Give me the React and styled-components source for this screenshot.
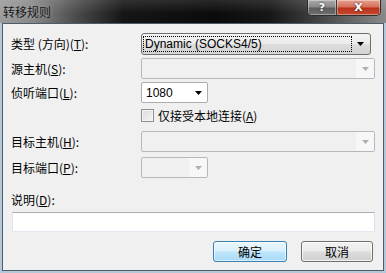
import React from "react";
import styled, { createGlobalStyle } from "styled-components";

const Global = createGlobalStyle`
  html, body { margin: 0; padding: 0; width: 386px; height: 273px; overflow: hidden; }
  body { font-family: "Noto Sans CJK SC", "Microsoft YaHei", sans-serif; font-size: 12px; color: #000; }
  * { box-sizing: border-box; }
`;

const Window = styled.div`
  width: 386px;
  height: 273px;
  display: flex;
  flex-direction: column;
  background: #b3c9da;
  padding: 0 2px 2px 2px;
`;

const TitleBar = styled.div`
  height: 23px;
  margin: 0 -2px;
  display: flex;
  align-items: flex-start;
  justify-content: space-between;
  background:
    linear-gradient(180deg, rgba(255,255,255,0.12) 0%, rgba(255,255,255,0) 60%),
    linear-gradient(90deg, #9c9c9c 0%, #8a8a8a 8%, #4a4a4a 20%, #151515 32%, #0b0b0b 55%, #161616 70%, #3a3a3a 80%, #6a6a6a 92%, #8a8a8a 100%);
`;

const Title = styled.div`
  padding: 4px 0 0 3px;
  font-size: 12px;
  line-height: 15px;
  color: #161616;
  text-shadow: 0 0 4px rgba(200,200,200,0.6);
`;

const Caps = styled.div`
  display: flex;
  margin-right: 5px;
  border: 1px solid #2e2e2e;
  border-top: none;
  border-radius: 0 0 5px 5px;
  overflow: hidden;
  height: 16px;
`;

const CapBtn = styled.div`
  width: ${p => p.$w}px;
  height: 100%;
  display: flex;
  align-items: center;
  justify-content: center;
  color: #fff;
  font-family: "DejaVu Sans", sans-serif;
  font-weight: bold;
  font-size: ${p => p.$fs}px;
  line-height: 1;
  text-shadow: 0 0 2px rgba(0,0,0,0.8);
  background: ${p => p.$red
    ? "linear-gradient(180deg, #e8a190 0%, #d5705b 45%, #b9321c 55%, #c74a30 100%)"
    : "linear-gradient(180deg, #a9a9a9 0%, #8a8a8a 45%, #5e5e5e 55%, #6e6e6e 100%)"};
  border-left: ${p => p.$red ? "1px solid #3a3a3a" : "none"};
  box-shadow: inset 0 0 0 1px rgba(255,255,255,0.35);
`;

const Client = styled.div`
  flex: 1;
  background: #f0f0f0;
  border: 1px solid #4f5b66;
  padding: 9px 9px 0 8px;
  display: flex;
  flex-direction: column;
`;

const Row = styled.div`
  display: grid;
  grid-template-columns: 130px 1fr;
  align-items: center;
  height: ${p => p.$h}px;
  margin-top: ${p => p.$mt || 0}px;
`;

const Label = styled.label`
  line-height: 16px;
  white-space: nowrap;
  u { text-decoration: underline; }
`;

const Combo = styled.div`
  width: ${p => p.$w}px;
  height: 100%;
  display: flex;
  align-items: center;
  border: 1px solid ${p => p.$disabled ? "#b5b8bb" : "#abadb3"};
  border-radius: 2px;
  background: ${p => p.$disabled ? "#f0f0f0" : "#fff"};
  font-family: "Liberation Sans", Arial, sans-serif;
  font-size: 12px;
  overflow: hidden;
`;

const DropButton = styled.div`
  width: ${p => p.$w}px;
  height: 100%;
  display: flex;
  align-items: center;
  border: 1px solid #707070;
  border-radius: 3px;
  background: linear-gradient(180deg, #f3f3f3 0%, #ebebeb 48%, #dddddd 52%, #d3d3d3 100%);
  padding: 2px 2px 2px 1px;
  font-family: "Liberation Sans", Arial, sans-serif;
  font-size: 12px;
`;

const Focus = styled.div`
  flex: 1;
  height: 100%;
  border: 1px dotted #000;
  display: flex;
  align-items: center;
  padding-left: 1px;
`;

const ComboText = styled.div`
  flex: 1;
  height: 100%;
  display: flex;
  align-items: center;
  padding-left: 4px;
`;

const ArrowBox = styled.div`
  width: ${p => p.$w || 18}px;
  height: 100%;
  display: flex;
  align-items: center;
  justify-content: center;
  background: ${p => p.$disabled ? "#f7f7f7" : "transparent"};
`;

const Arrow = ({ color = "#000" }) => (
  <svg width="7" height="4" viewBox="0 0 7 4">
    <polygon points="0,0 7,0 3.5,4" fill={color} />
  </svg>
);

const CheckRow = styled.div`
  display: flex;
  align-items: center;
  gap: 4px;
`;

const CheckBox = styled.div`
  width: 13px;
  height: 13px;
  border: 1px solid #8e8f8f;
  background: linear-gradient(135deg, #dcdcdc 0%, #f4f4f4 100%);
  box-shadow: inset 0 0 0 1px #f4f4f4;
`;

const TextInput = styled.div`
  height: ${p => p.$h}px;
  margin-top: ${p => p.$mt}px;
  width: 363px;
  margin-left: 1px;
  background: #fff;
  border: 1px solid #abadb3;
  border-top-color: #abadb3;
  border-left-color: #e2e3ea;
  border-right-color: #dbdfe6;
  border-bottom-color: #e3e9ef;
`;

const ButtonBar = styled.div`
  display: flex;
  justify-content: flex-end;
  gap: 14px;
  margin-top: 9px;
  height: 21px;
  padding-right: 1px;
`;

const Button = styled.div`
  width: ${p => p.$w}px;
  height: 21px;
  display: flex;
  align-items: center;
  justify-content: center;
  border-radius: 3px;
  font-size: 12px;
  border: 1px solid ${p => p.$default ? "#3c7fb1" : "#707070"};
  background: ${p => p.$default
    ? "linear-gradient(180deg, #eaf6fd 0%, #d9f0fc 48%, #bee6fd 52%, #a7d9f5 100%)"
    : "linear-gradient(180deg, #f2f2f2 0%, #ebebeb 48%, #dddddd 52%, #cfcfcf 100%)"};
  box-shadow: inset 0 0 0 1px ${p => p.$default ? "rgba(255,255,255,0.6)" : "rgba(255,255,255,0.7)"};
`;

export default function App() {
  return (
    <>
      <Global />
      <Window>
        <TitleBar>
          <Title>转移规则</Title>
          <Caps>
            <CapBtn $w={28} $fs={11}>?</CapBtn>
            <CapBtn $w={44} $fs={11} $red>X</CapBtn>
          </Caps>
        </TitleBar>
        <Client>
          <Row $h={20}>
            <Label>类型 (方向)(<u>T</u>):</Label>
            <DropButton $w={230}>
              <Focus>Dynamic (SOCKS4/5)</Focus>
              <ArrowBox $w={16}><Arrow /></ArrowBox>
            </DropButton>
          </Row>
          <Row $h={21} $mt={5}>
            <Label>源主机(<u>S</u>):</Label>
            <Combo $w={234} $disabled>
              <ComboText />
              <ArrowBox $disabled><Arrow color="#b0b0b0" /></ArrowBox>
            </Combo>
          </Row>
          <Row $h={21} $mt={3}>
            <Label>侦听端口(<u>L</u>):</Label>
            <Combo $w={67}>
              <ComboText>1080</ComboText>
              <ArrowBox><Arrow /></ArrowBox>
            </Combo>
          </Row>
          <Row $h={19} $mt={3}>
            <span />
            <CheckRow>
              <CheckBox />
              <Label>仅接受本地连接(<u>A</u>)</Label>
            </CheckRow>
          </Row>
          <Row $h={21} $mt={6}>
            <Label>目标主机(<u>H</u>):</Label>
            <Combo $w={234} $disabled>
              <ComboText />
              <ArrowBox $disabled><Arrow color="#b0b0b0" /></ArrowBox>
            </Combo>
          </Row>
          <Row $h={21} $mt={5}>
            <Label>目标端口(<u>P</u>):</Label>
            <Combo $w={67} $disabled>
              <ComboText />
              <ArrowBox $disabled><Arrow color="#b0b0b0" /></ArrowBox>
            </Combo>
          </Row>
          <Row $h={16} $mt={14}>
            <Label>说明(<u>D</u>):</Label>
          </Row>
          <TextInput $h={20} $mt={4} />
          <ButtonBar>
            <Button $w={74} $default>确定</Button>
            <Button $w={72}>取消</Button>
          </ButtonBar>
        </Client>
      </Window>
    </>
  );
}
